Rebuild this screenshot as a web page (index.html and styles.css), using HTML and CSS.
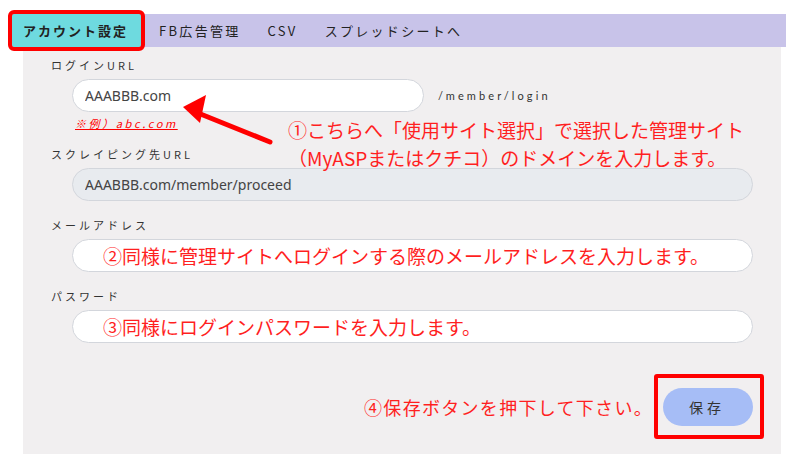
FILE: index.html
```html
<!DOCTYPE html>
<html>
<head>
    <link rel="stylesheet" href="styles.css">
</head>
<body>
    <div class="page">
        <div class="tabs">
            <div class="tab active">アカウント設定</div>
            <div class="tab">FB広告管理</div>
            <div class="tab">CSV</div>
            <div class="tab">スプレッドシートへ</div>
        </div>

        <div class="panel">
            <div class="field">
                <div class="label">ログインURL</div>
                <div class="row">
                    <input class="input short" type="text" value="AAABBB.com">
                    <span class="suffix">/member/login</span>
                </div>
                <div class="example">※例）abc.com</div>
            </div>

            <div class="field">
                <div class="label">スクレイピング先URL</div>
                <input class="input disabled" type="text" value="AAABBB.com/member/proceed" disabled>
            </div>

            <div class="field">
                <div class="label">メールアドレス</div>
                <input class="input memo" type="text" placeholder="②同様に管理サイトへログインする際のメールアドレスを入力します。">
            </div>

            <div class="field">
                <div class="label">パスワード</div>
                <input class="input memo" type="text" placeholder="③同様にログインパスワードを入力します。">
            </div>

            <div class="save-row">
                <span class="memo-text">④保存ボタンを押下して下さい。</span>
                <div class="mark">
                    <button class="save">保存</button>
                </div>
            </div>
        </div>

        <div class="callout">①こちらへ「使用サイト選択」で選択した管理サイト<br>（MyASPまたはクチコ）のドメインを入力します。</div>

        <svg class="arrow" width="786" height="461" viewBox="0 0 786 461">
            <line x1="270" y1="142" x2="198" y2="113" stroke="#f00" stroke-width="5" stroke-linecap="round"/>
            <polygon points="183,107 206,95 200,123" fill="#f00"/>
        </svg>
    </div>
</body>
</html>
```

FILE: styles.css
```css
body {
    margin: 0;
    background: #fff;
    font-family: "Noto Sans CJK JP", "Noto Sans", sans-serif;
    color: #333;
}

.page {
    position: relative;
    width: 786px;
    height: 461px;
    padding-top: 14px;
    box-sizing: border-box;
}

.tabs {
    display: flex;
    margin-left: 12px;
    height: 33px;
    background: #c8c3e9;
}

.tab {
    display: flex;
    align-items: center;
    padding: 0 12px 0 15px;
    font-size: 13px;
    letter-spacing: 2.3px;
    color: #222;
}

.tab.active {
    padding: 0 13px 0 11px;
    margin-right: 3px;
    background: #6edadf;
    font-weight: bold;
    letter-spacing: 2px;
    outline: 4px solid #f00;
    border-radius: 2px;
}

.panel {
    margin-left: 23px;
    width: 758px;
    padding: 11px 28px 15px 28px;
    box-sizing: border-box;
    background: #f1eff0;
}

.field {
    margin-top: 17px;
}

.field:first-child {
    margin-top: 0;
}

.label {
    height: 14px;
    line-height: 14px;
    font-size: 11px;
    letter-spacing: 3px;
    color: #333;
    margin-bottom: 7px;
}

.row {
    display: flex;
    align-items: center;
}

.input {
    display: block;
    margin-left: 21px;
    width: 681px;
    height: 33px;
    padding: 0 12px;
    box-sizing: border-box;
    border: 1px solid #d3d6dc;
    border-radius: 17px;
    background: #fff;
    font-family: "Noto Sans", sans-serif;
    font-size: 14px;
    color: #444;
    outline: none;
}

.input.short {
    width: 352px;
}

.input.disabled {
    background: #e8ebef;
    color: #444;
}

.input.memo {
    padding-left: 30px;
    font-family: "Noto Sans CJK JP", sans-serif;
    font-size: 19px;
}

.input.memo::placeholder {
    color: #ff1f1f;
    opacity: 1;
}

.suffix {
    margin-left: 14px;
    font-family: "Lato", sans-serif;
    font-size: 11px;
    letter-spacing: 3.1px;
    color: #333;
}

.example {
    margin: 4px 0 0 24px;
    height: 14px;
    line-height: 14px;
    font-size: 11px;
    font-style: italic;
    letter-spacing: 2.6px;
    color: #f00;
    text-decoration: underline;
}

.save-row {
    display: flex;
    justify-content: flex-end;
    align-items: center;
    margin-top: 31px;
    margin-right: -11px;
}

.memo-text {
    font-size: 18px;
    letter-spacing: 1.3px;
    color: #ff1f1f;
    margin-right: 1px;
}

.mark {
    border: 4px solid #f00;
    border-radius: 3px;
    padding: 10px 7px 9px 5px;
}

.save {
    display: block;
    width: 90px;
    height: 38px;
    border: none;
    border-radius: 19px;
    background: #a6bdf6;
    font-family: "Noto Sans CJK JP", sans-serif;
    font-size: 14px;
    letter-spacing: 4px;
    padding-left: 4px;
    color: #333;
}

.callout {
    position: absolute;
    left: 288px;
    top: 116px;
    font-size: 19px;
    line-height: 28px;
    color: #ff1f1f;
    white-space: nowrap;
}

.arrow {
    position: absolute;
    left: 0;
    top: 0;
    pointer-events: none;
}
```
